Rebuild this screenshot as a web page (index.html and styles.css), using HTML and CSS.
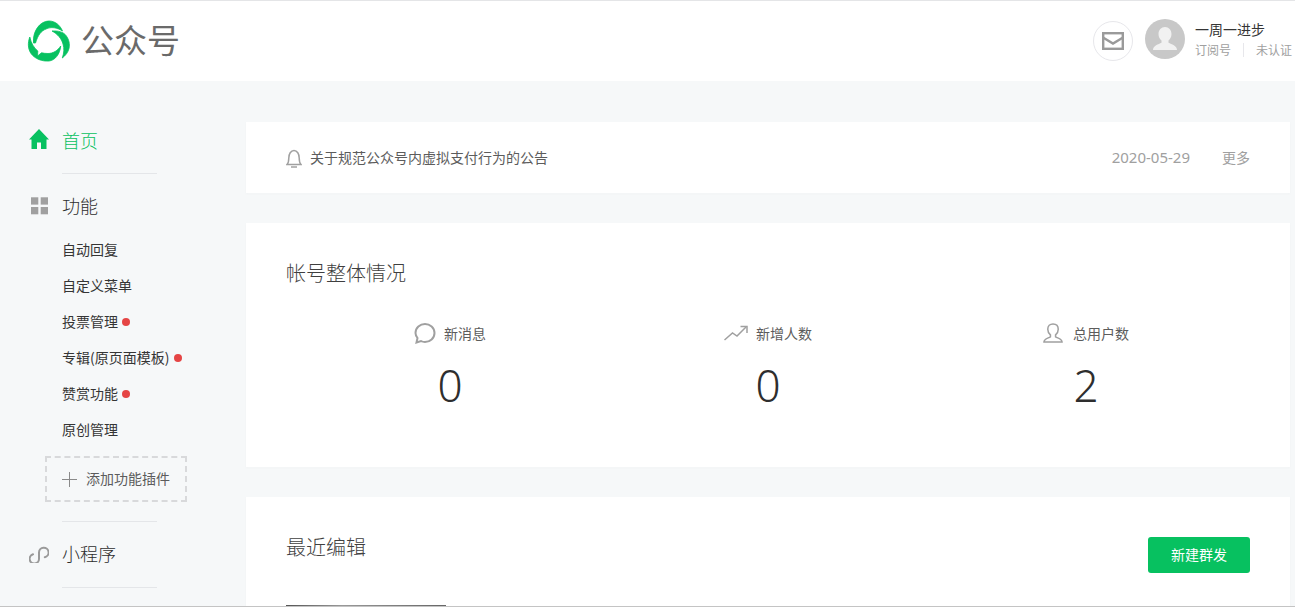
FILE: index.html
```html
<!DOCTYPE html>
<html lang="zh-CN">
<head>
<meta charset="utf-8">
<title>公众号</title>
<link rel="stylesheet" href="styles.css">
</head>
<body>
<div class="page">
  <header class="topbar">
    <div class="brand">
      <svg class="logo" viewBox="0 0 42 42" width="42" height="42" fill="#07c160" stroke="#07c160" stroke-width=".8" stroke-linejoin="round">
        <path d="M5.500 23C4.500 11 12 1 21 1 27 1 32 5 34.500 11 29 7.500 23 6.500 18 9 13 11 10 15 7.500 23Z"/>
        <path d="M24 11C30 10.500 35.500 12 38 15.500 41 19.500 42 24 41 28.500 40 32.500 37.500 35.500 34.300 38 36 33 36.500 28.500 35 24 33.500 18.500 29.500 14 24 11Z"/>
        <path d="M1.800 17C-.5 23 0 29 3 33.500 7 39 14 41.500 21 41 27 40.500 32 34 32.700 26 30 30.500 25 33.500 20 33.500 18 33.500 15.500 33.300 13.500 32.800L9.500 36 9.800 31C6 28 3 23 1.800 17Z"/>
      </svg>
      <span class="brand-name">公众号</span>
    </div>
    <div class="account">
      <span class="mail">
        <svg viewBox="0 0 22 18" width="22" height="18" fill="none" stroke="#9a9a9a" stroke-width="2.400">
          <rect x="1.200" y="1.200" width="19.600" height="15.600"/>
          <path d="M1 5.500 11 11.500 21 5.500"/>
        </svg>
      </span>
      <span class="avatar">
        <svg viewBox="0 0 40 40" width="40" height="40" fill="#f1f1f1">
          <path d="M20 8c3.800 0 6.500 3 6.500 7 0 2.800-1.200 5.200-3 6.500v2.200c3 1.500 8.500 2.800 8.500 7.300H8c0-4.500 5.500-5.800 8.500-7.300v-2.200c-1.800-1.300-3-3.700-3-6.500 0-4 2.700-7 6.500-7Z"/>
        </svg>
      </span>
      <div class="account-text">
        <div class="account-name">一周一进步</div>
        <div class="account-meta"><span>订阅号</span><i class="meta-sep"></i><span>未认证</span></div>
      </div>
    </div>
  </header>

  <div class="body-row">
    <nav class="sidebar">
      <a class="nav-head nav-active">
        <svg class="nav-icon icon-home" viewBox="0 0 20 20" width="20" height="20" fill="#07c160">
          <path d="M10 0 20 10.500H17.500V20H12V13.500H8V20H2.500V10.500H0Z"/>
        </svg>
        首页
      </a>
      <div class="nav-rule rule-one"></div>
      <a class="nav-head">
        <svg class="nav-icon" viewBox="0 0 20 20" width="20" height="20" fill="#a0a0a0">
          <rect x="2" y="2.300" width="7.300" height="7.300"/><rect x="11.700" y="2.300" width="7.300" height="7.300"/>
          <rect x="2" y="12" width="7.300" height="7.300"/><rect x="11.700" y="12" width="7.300" height="7.300"/>
        </svg>
        功能
      </a>
      <ul class="sub-list">
        <li>自动回复</li>
        <li>自定义菜单</li>
        <li>投票管理<i class="dot"></i></li>
        <li>专辑(原页面模板)<i class="dot dot-wide"></i></li>
        <li>赞赏功能<i class="dot"></i></li>
        <li>原创管理</li>
      </ul>
      <a class="add-plugin"><i class="plus"></i>添加功能插件</a>
      <div class="nav-rule rule-two"></div>
      <a class="nav-head">
        <svg class="nav-icon" viewBox="0 0 20 20" width="20" height="20" fill="none" stroke="#9a9a9a" stroke-width="2" stroke-linecap="round">
          <path d="M4 11.300A4.700 4.700 0 1 0 10 15.500V9.500A4.800 4.800 0 1 1 15.800 14.200"/>
        </svg>
        小程序
      </a>
      <div class="nav-rule rule-three"></div>
    </nav>

    <main class="content">
      <section class="card notice">
        <svg class="bell" viewBox="0 0 16 19" width="16" height="19" fill="none" stroke="#a0a0a0" stroke-width="1.500">
          <path d="M1 15.500c1.500-1.500 1.800-3 1.800-6.500 0-4 2-7.500 5.200-7.500s5.200 3.500 5.200 7.500c0 3.500.3 5 1.800 6.500Z"/>
          <path d="M5 18h6"/>
        </svg>
        <span class="notice-text">关于规范公众号内虚拟支付行为的公告</span>
        <span class="notice-date">2020-05-29</span>
        <span class="notice-more">更多</span>
      </section>

      <section class="card overview">
        <h2 class="card-title">帐号整体情况</h2>
        <div class="stats">
          <div class="stat">
            <div class="stat-label">
              <svg viewBox="0 0 22 22" width="22" height="22" fill="none" stroke="#a0a0a0" stroke-width="2">
                <path d="M11 2c5 0 9.500 3.800 9.500 9s-4.500 9-9.500 9c-1.500 0-3-.4-4-1L2.500 20.500 3.500 16C2.300 14.500 1.500 13 1.500 11 1.500 5.800 6 2 11 2Z"/>
              </svg>
              新消息
            </div>
            <div class="stat-value">0</div>
          </div>
          <div class="stat">
            <div class="stat-label">
              <svg viewBox="0 0 24 16" width="24" height="16" fill="none" stroke="#a0a0a0" stroke-width="1.500">
                <path d="M.5 15 8.500 8 13 11 22 2"/>
                <path d="M16.500 1.500H23V8" stroke-width="1.500"/>
              </svg>
              新增人数
            </div>
            <div class="stat-value">0</div>
          </div>
          <div class="stat">
            <div class="stat-label">
              <svg class="icon-user" viewBox="0 0 21 21" width="20" height="20" fill="none" stroke="#a0a0a0" stroke-width="1.600">
                <path d="M1 20c0-3.500 4.500-4 6.800-5.500v-2C6 11 5 9 5 6.500 5 3 7.300 1 10.500 1S16 3 16 6.500c0 2.500-1 4.500-2.800 6v2C15.500 16 20 16.500 20 20Z"/>
              </svg>
              总用户数
            </div>
            <div class="stat-value">2</div>
          </div>
        </div>
      </section>

      <section class="card recent">
        <div class="recent-head">
          <h2 class="card-title">最近编辑</h2>
          <a class="btn-primary">新建群发</a>
        </div>
        <div class="thumb"></div>
      </section>
    </main>
  </div>
</div>
</body>
</html>
```

FILE: styles.css
```css
* { box-sizing: border-box; }
html, body { margin: 0; padding: 0; background: #fff; }
body {
  font-family: "Noto Sans CJK SC", "Noto Sans", sans-serif;
  color: #353535;
  overflow: hidden;
}
a { color: inherit; text-decoration: none; }
h2, ul { margin: 0; padding: 0; }
ul { list-style: none; }
i { display: block; font-style: normal; }

.page {
  height: 607px;
  background: #f6f8f9;
  border-top: 1px solid #e4e5e7;
  border-bottom: 1px solid #c4c4c4;
  overflow: hidden;
}

.topbar {
  display: flex;
  align-items: center;
  height: 80px;
  padding-right: 3px;
  background: #fff;
}
.brand { display: flex; align-items: center; padding-left: 28px; }
.logo { display: block; overflow: visible; }
.brand-name {
  margin: -4px 0 0 11px;
  font-size: 33px;
  font-weight: 400;
  line-height: 44px;
  color: #6a6a6a;
}
.account { display: flex; align-items: center; margin-left: auto; }
.mail {
  display: flex;
  align-items: center;
  justify-content: center;
  width: 40px;
  height: 40px;
  border: 1px solid #e7e7eb;
  border-radius: 50%;
}
.avatar {
  display: block;
  width: 40px;
  height: 40px;
  margin: -4px 10px 0 12px;
  border-radius: 50%;
  background: #c8c8c8;
  overflow: hidden;
}
.avatar svg { display: block; }
.account-text { margin-top: -4px; }
.account-name { font-size: 14px; line-height: 20px; color: #353535; }
.account-meta {
  display: flex;
  align-items: center;
  margin-top: 1px;
  font-size: 12px;
  line-height: 20px;
  color: #a0a0a0;
}
.meta-sep { width: 1px; height: 14px; margin: 0 12px; background: #e7e7eb; }

.body-row { display: flex; }
.sidebar { flex: 0 0 246px; padding-top: 42px; }
.nav-head {
  display: flex;
  align-items: center;
  height: 36px;
  padding: 0 0 2px 29px;
  font-size: 18px;
  font-weight: 300;
  color: #2e2e2e;
}
.nav-icon { flex: none; margin-right: 13px; }
.icon-home { margin-top: -2px; }
.nav-active { color: #07c160; }
.nav-rule { width: 95px; height: 1px; margin-left: 62px; background: #e4e6e9; }
.rule-one { margin-top: 14px; margin-bottom: 14px; }
.rule-two { margin-top: 19px; margin-bottom: 14px; }
.rule-three { margin-top: 15px; }
.sub-list { padding: 8px 0 0 62px; }
.sub-list li {
  display: flex;
  align-items: center;
  height: 36px;
  padding-bottom: 2px;
  font-size: 14px;
  color: #353535;
}
.dot {
  width: 8px;
  height: 8px;
  margin: 2px 0 0 4px;
  border-radius: 50%;
  background: #e54545;
}
.dot-wide { margin-left: 5px; }
.add-plugin {
  display: flex;
  align-items: center;
  width: 142px;
  height: 46px;
  margin: 8px 0 0 45px;
  padding: 0 0 2px 15px;
  border: 2px dashed #d8d9db;
  font-size: 14px;
  color: #5c5c5c;
}
.plus {
  width: 15px;
  height: 15px;
  margin: 2px 9px 0 0;
  background:
    linear-gradient(#8a8a8a, #8a8a8a) center / 15px 1px no-repeat,
    linear-gradient(#8a8a8a, #8a8a8a) center / 1px 15px no-repeat;
}

.content {
  flex: 0 0 1044px;
  display: flex;
  flex-direction: column;
  gap: 30px;
  padding-top: 41px;
}
.card {
  background: #fff;
  box-shadow: 0 1px 2px rgba(150, 150, 150, .04);
}
.notice {
  display: flex;
  align-items: center;
  height: 71px;
  padding: 0 40px 2px;
  font-size: 14px;
}
.bell { flex: none; margin-right: 8px; margin-top: 4px; }
.notice-text { color: #5c5c5c; }
.notice-date {
  margin-left: auto;
  color: #a0a0a0;
  font-family: "Noto Sans", sans-serif;
  font-size: 15px;
}
.notice-more { margin-left: 32px; color: #a0a0a0; }

.overview { height: 244px; padding: 36px 40px 0; }
.card-title {
  font-size: 20px;
  font-weight: 300;
  line-height: 28px;
  color: #3f3f3f;
}
.stats {
  display: grid;
  grid-template-columns: repeat(3, 318px);
  margin: 33px 5px 0;
}
.stat { display: flex; flex-direction: column; align-items: center; }
.stat-label {
  display: flex;
  align-items: center;
  gap: 8px;
  height: 26px;
  font-size: 14px;
  color: #5c5c5c;
}
.icon-user { margin-right: 2px; }
.stat-value {
  margin-top: 9px;
  font-family: "Noto Sans", sans-serif;
  font-size: 44px;
  font-weight: 300;
  line-height: 60px;
  color: #2e2e2e;
}

.recent { flex: none; height: 200px; padding: 0 40px; }
.recent-head {
  display: flex;
  align-items: flex-start;
  justify-content: space-between;
  height: 108px;
  padding-top: 36px;
}
.btn-primary {
  display: block;
  width: 102px;
  height: 36px;
  margin-top: 4px;
  padding-bottom: 2px;
  border-radius: 3px;
  background: #07c160;
  color: #fff;
  font-size: 14px;
  line-height: 34px;
  text-align: center;
}
.thumb {
  width: 160px;
  height: 90px;
  background: linear-gradient(90deg, #555, #999 35%, #666);
}
```
